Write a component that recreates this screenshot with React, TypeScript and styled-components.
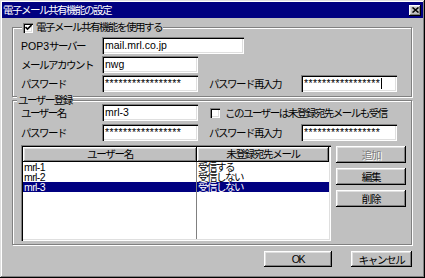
import React from 'react';
import styled, { createGlobalStyle } from 'styled-components';

const FONT = `"Liberation Sans", "Noto Sans CJK JP", "Noto Sans", sans-serif`;

const Global = createGlobalStyle`
  html, body { margin: 0; padding: 0; background: #c0c0c0; }
  * { box-sizing: border-box; }
`;

const raised = `box-shadow: inset -1px -1px #000, inset 1px 1px #fff, inset -2px -2px #808080, inset 2px 2px #dfdfdf;`;
const sunken = `box-shadow: inset 1px 1px #808080, inset 2px 2px #000, inset -1px -1px #fff, inset -2px -2px #dfdfdf;`;

const Window = styled.div`
  width: 425px;
  height: 278px;
  padding: 2px;
  background: #c0c0c0;
  box-shadow: inset -1px -1px #000, inset 1px 1px #dfdfdf, inset -2px -2px #808080, inset 2px 2px #fff;
  display: flex;
  flex-direction: column;
  font-family: ${FONT};
  font-size: 10.5px;
  color: #000;
`;

const TitleBar = styled.div`
  height: 16px;
  background: #000080;
  color: #fff;
  display: flex;
  align-items: center;
  justify-content: space-between;
  padding: 0 2px 0 1px;
`;

const TitleText = styled.span`
  letter-spacing: -1.5px;
  line-height: 16px;
  white-space: nowrap;
`;

const CloseButton = styled.div`
  width: 12px;
  height: 11px;
  background: #c0c0c0;
  ${raised}
  display: flex;
  align-items: center;
  justify-content: center;
`;

const Group = styled.div<{ $h: number; $mt: number; $pt: number }>`
  position: relative;
  width: 400px;
  height: ${(p) => p.$h}px;
  margin: ${(p) => p.$mt}px 0 0 10px;
  border: 1px solid #808080;
  box-shadow: inset 1px 1px #fff, 1px 1px #fff;
  padding: ${(p) => p.$pt}px 0 0 8px;
  display: flex;
  flex-direction: column;
`;

const Legend = styled.div<{ $left: number }>`
  position: absolute;
  top: -7px;
  left: ${(p) => p.$left}px;
  height: 13px;
  padding: 0 1px;
  background: #c0c0c0;
  display: flex;
  align-items: center;
  gap: 3px;
  line-height: 13px;
  letter-spacing: -1.5px;
  white-space: nowrap;
`;

const CheckBox = styled.div`
  width: 10px;
  height: 10px;
  background: #fff;
  ${sunken}
  display: flex;
  align-items: center;
  justify-content: center;
  flex: none;
`;

const FieldRow = styled.div<{ $mt?: number }>`
  display: flex;
  align-items: center;
  height: 17px;
  margin-top: ${(p) => p.$mt ?? 0}px;
`;

const Label = styled.span<{ $w: number; $ml?: number }>`
  width: ${(p) => p.$w}px;
  margin-left: ${(p) => p.$ml ?? 0}px;
  letter-spacing: -1.5px;
  white-space: nowrap;
  flex: none;
`;

const Latin = styled.span`
  letter-spacing: 0;
`;

const Field = styled.div<{ $w: number; $secret?: boolean }>`
  width: ${(p) => p.$w}px;
  height: 17px;
  background: #fff;
  ${sunken}
  padding: 0 3px;
  line-height: 17px;
  white-space: nowrap;
  overflow: hidden;
  flex: none;
  letter-spacing: ${(p) => (p.$secret ? '0.4px' : '0')};
  display: flex;
  align-items: center;
`;

const Caret = styled.span`
  display: inline-block;
  width: 1px;
  height: 11px;
  background: #000;
  margin-left: 1px;
`;

const Spacer = styled.span<{ $w: number }>`
  width: ${(p) => p.$w}px;
  flex: none;
`;

const CheckLabel = styled.span`
  margin-left: 5px;
  letter-spacing: -1.5px;
  white-space: nowrap;
`;

const ListRow = styled.div`
  display: flex;
  align-items: flex-start;
  margin-top: 4px;
`;

const ListView = styled.div`
  width: 310px;
  height: 96px;
  background: #fff;
  ${sunken}
  padding: 2px;
  display: flex;
  flex-direction: column;
`;

const ListHeader = styled.div`
  display: flex;
  height: 15px;
  flex: none;
`;

const HeaderCell = styled.div<{ $w: number }>`
  width: ${(p) => p.$w}px;
  height: 15px;
  background: #c0c0c0;
  ${raised}
  text-align: center;
  line-height: 15px;
  letter-spacing: -1.3px;
  white-space: nowrap;
`;

const ListBody = styled.div`
  flex: 1;
  display: flex;
`;

const Column = styled.div<{ $w: number; $divider?: boolean; $ls: number }>`
  width: ${(p) => p.$w}px;
  border-right: ${(p) => (p.$divider ? '1px solid #808080' : 'none')};
  display: flex;
  flex-direction: column;
  letter-spacing: ${(p) => p.$ls}px;
`;

const Cell = styled.div<{ $sel?: boolean }>`
  height: 10px;
  line-height: 10px;
  padding-left: 1px;
  background: ${(p) => (p.$sel ? '#000080' : 'transparent')};
  color: ${(p) => (p.$sel ? '#fff' : '#000')};
  white-space: nowrap;
  overflow: hidden;
`;

const SideButtons = styled.div`
  display: flex;
  flex-direction: column;
  gap: 5px;
  margin: 1px 0 0 5px;
`;

const Button = styled.div<{ $w: number; $h: number; $disabled?: boolean }>`
  width: ${(p) => p.$w}px;
  height: ${(p) => p.$h}px;
  background: #c0c0c0;
  ${raised}
  display: flex;
  align-items: center;
  justify-content: center;
  letter-spacing: -1.3px;
  white-space: nowrap;
  color: ${(p) => (p.$disabled ? '#808080' : '#000')};
  text-shadow: ${(p) => (p.$disabled ? '1px 1px #fff' : 'none')};
`;

const Footer = styled.div`
  display: flex;
  justify-content: flex-end;
  gap: 19px;
  margin-top: 6px;
  padding-right: 11px;
`;

const stars = '*****************';

const Check = () => (
  <svg width="7" height="7" viewBox="0 0 7 7">
    <path d="M0.5 3 L2.5 5 L6.5 1" stroke="#000" strokeWidth="1.6" fill="none" />
  </svg>
);

const users = [
  { name: 'mrl-1', recv: '受信する', sel: false },
  { name: 'mrl-2', recv: '受信しない', sel: false },
  { name: 'mrl-3', recv: '受信しない', sel: true },
];

export default function App() {
  return (
    <>
      <Global />
      <Window>
        <TitleBar>
          <TitleText>電子メール共有機能の設定</TitleText>
          <CloseButton>
            <svg width="7" height="6" viewBox="0 0 7 6">
              <path d="M0.5 0.5 L6.5 5.5 M6.5 0.5 L0.5 5.5" stroke="#000" strokeWidth="1.5" />
            </svg>
          </CloseButton>
        </TitleBar>

        <Group $h={70} $mt={9} $pt={9}>
          <Legend $left={9}>
            <CheckBox>
              <Check />
            </CheckBox>
            <span>電子メール共有機能を使用する</span>
          </Legend>
          <FieldRow>
            <Label $w={81}>
              <Latin>POP3</Latin>サーバー
            </Label>
            <Field $w={142}>mail.mrl.co.jp</Field>
          </FieldRow>
          <FieldRow $mt={2}>
            <Label $w={81}>メールアカウント</Label>
            <Field $w={96}>nwg</Field>
          </FieldRow>
          <FieldRow $mt={2}>
            <Label $w={81}>パスワード</Label>
            <Field $w={96} $secret>{stars}</Field>
            <Label $w={92} $ml={11}>パスワード再入力</Label>
            <Field $w={96} $secret>
              {stars}
              <Caret />
            </Field>
          </FieldRow>
        </Group>

        <Group $h={145} $mt={3} $pt={3}>
          <Legend $left={4}>ユーザー登録</Legend>
          <FieldRow>
            <Label $w={81}>ユーザー名</Label>
            <Field $w={96}>mrl-3</Field>
            <Spacer $w={12} />
            <CheckBox />
            <CheckLabel>このユーザーは未登録宛先メールも受信</CheckLabel>
          </FieldRow>
          <FieldRow $mt={3}>
            <Label $w={81}>パスワード</Label>
            <Field $w={96} $secret>{stars}</Field>
            <Label $w={92} $ml={11}>パスワード再入力</Label>
            <Field $w={96} $secret>{stars}</Field>
          </FieldRow>
          <ListRow>
            <ListView>
              <ListHeader>
                <HeaderCell $w={174}>ユーザー名</HeaderCell>
                <HeaderCell $w={132}>未登録宛先メール</HeaderCell>
              </ListHeader>
              <ListBody>
                <Column $w={174} $divider $ls={-0.6}>
                  {users.map((u) => (
                    <Cell key={u.name} $sel={u.sel}>
                      {u.name}
                    </Cell>
                  ))}
                </Column>
                <Column $w={132} $ls={-1.5}>
                  {users.map((u) => (
                    <Cell key={u.name} $sel={u.sel}>
                      {u.recv}
                    </Cell>
                  ))}
                </Column>
              </ListBody>
            </ListView>
            <SideButtons>
              <Button $w={70} $h={17} $disabled>追加</Button>
              <Button $w={70} $h={17}>編集</Button>
              <Button $w={70} $h={17}>削除</Button>
            </SideButtons>
          </ListRow>
        </Group>

        <Footer>
          <Button $w={68} $h={16}>OK</Button>
          <Button $w={61} $h={16}>キャンセル</Button>
        </Footer>
      </Window>
    </>
  );
}
